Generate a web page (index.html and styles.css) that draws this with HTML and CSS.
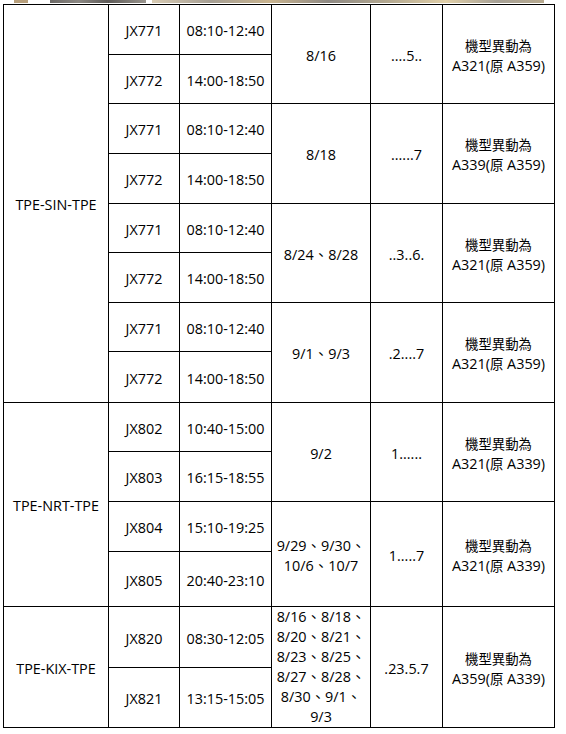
FILE: index.html
```html
<!DOCTYPE html>
<html lang="zh-Hant">
<head>
<meta charset="utf-8">
<link rel="stylesheet" href="styles.css">
</head>
<body>
<div class="strip">
  <span class="s1"></span><span class="s2"></span><span class="s3"></span>
</div>
<table class="sched">
  <colgroup>
    <col class="c1"><col class="c2"><col class="c3"><col class="c4"><col class="c5"><col class="c6">
  </colgroup>
  <tbody>
    <tr class="h50">
      <td rowspan="8">TPE-SIN-TPE</td>
      <td>JX771</td><td>08:10-12:40</td>
      <td rowspan="2">8/16</td><td rowspan="2">....5..</td>
      <td rowspan="2"><span class="zh">機型異動為</span><br>A321(<span class="zh">原</span> A359)</td>
    </tr>
    <tr class="h49"><td>JX772</td><td>14:00-18:50</td></tr>
    <tr class="h50">
      <td>JX771</td><td>08:10-12:40</td>
      <td rowspan="2">8/18</td><td rowspan="2">......7</td>
      <td rowspan="2"><span class="zh">機型異動為</span><br>A339(<span class="zh">原</span> A359)</td>
    </tr>
    <tr class="h50"><td>JX772</td><td>14:00-18:50</td></tr>
    <tr class="h49">
      <td>JX771</td><td>08:10-12:40</td>
      <td rowspan="2">8/24、8/28</td><td rowspan="2">..3..6.</td>
      <td rowspan="2"><span class="zh">機型異動為</span><br>A321(<span class="zh">原</span> A359)</td>
    </tr>
    <tr class="h50"><td>JX772</td><td>14:00-18:50</td></tr>
    <tr class="h49">
      <td>JX771</td><td>08:10-12:40</td>
      <td rowspan="2">9/1、9/3</td><td rowspan="2">.2....7</td>
      <td rowspan="2"><span class="zh">機型異動為</span><br>A321(<span class="zh">原</span> A359)</td>
    </tr>
    <tr class="h51"><td>JX772</td><td>14:00-18:50</td></tr>

    <tr class="h49">
      <td rowspan="4">TPE-NRT-TPE</td>
      <td>JX802</td><td>10:40-15:00</td>
      <td rowspan="2">9/2</td><td rowspan="2">1......</td>
      <td rowspan="2"><span class="zh">機型異動為</span><br>A321(<span class="zh">原</span> A339)</td>
    </tr>
    <tr class="h50"><td>JX803</td><td>16:15-18:55</td></tr>
    <tr class="h50">
      <td>JX804</td><td>15:10-19:25</td>
      <td rowspan="2">9/29、9/30、<br>10/6、10/7</td><td rowspan="2">1.....7</td>
      <td rowspan="2"><span class="zh">機型異動為</span><br>A321(<span class="zh">原</span> A339)</td>
    </tr>
    <tr class="h55"><td>JX805</td><td>20:40-23:10</td></tr>

    <tr class="h61">
      <td rowspan="2">TPE-KIX-TPE</td>
      <td>JX820</td><td>08:30-12:05</td>
      <td rowspan="2" class="dates">8/16、8/18、<br>8/20、8/21、<br>8/23、8/25、<br>8/27、8/28、<br>8/30、9/1、<br>9/3</td>
      <td rowspan="2">.23.5.7</td>
      <td rowspan="2"><span class="zh">機型異動為</span><br>A359(<span class="zh">原</span> A339)</td>
    </tr>
    <tr class="h60"><td>JX821</td><td>13:15-15:05</td></tr>
  </tbody>
</table>
</body>
</html>
```

FILE: styles.css
```css
html, body {
  margin: 0;
  padding: 0;
  background: #fff;
}
body {
  font-family: "Open Sans", "Noto Sans CJK TC", sans-serif;
  font-size: 14.4px;
  color: #000;
}
.strip {
  height: 3px;
  display: flex;
  align-items: stretch;
}
.strip .s1 {
  margin-left: 14px;
  width: 14px;
  background: #b79f7c;
}
.strip .s2 {
  margin-left: 22px;
  width: 96px;
  background: linear-gradient(90deg, #6d6a67, #8c8883 30%, #5e5b58 60%, #9a958e);
}
.strip .s3 {
  margin-left: 6px;
  width: 392px;
  background: linear-gradient(90deg, #d8cbb3, #a69f94 15%, #c9b48f 30%, #8f8a84 45%, #b3a890 60%, #e0cfa8 75%, #a7a196 88%, #b8aa8f);
}
.sched {
  margin: 1px 0 0 3px;
  border-collapse: collapse;
  table-layout: fixed;
  width: 551px;
}
.sched td {
  border: 1px solid #000;
  text-align: center;
  vertical-align: middle;
  padding: 3px 0 0;
  line-height: 20px;
  white-space: nowrap;
}
.sched td.dates {
  padding: 0;
}
.zh {
  font-size: 13.4px;
}
.c1 { width: 105px; }
.c2 { width: 71px; }
.c3 { width: 92px; }
.c4 { width: 99px; }
.c5 { width: 72px; }
.c6 { width: 112px; }
.h49 { height: 49px; }
.h50 { height: 50px; }
.h51 { height: 51px; }
.h55 { height: 55px; }
.h60 { height: 60px; }
.h61 { height: 61px; }
```
